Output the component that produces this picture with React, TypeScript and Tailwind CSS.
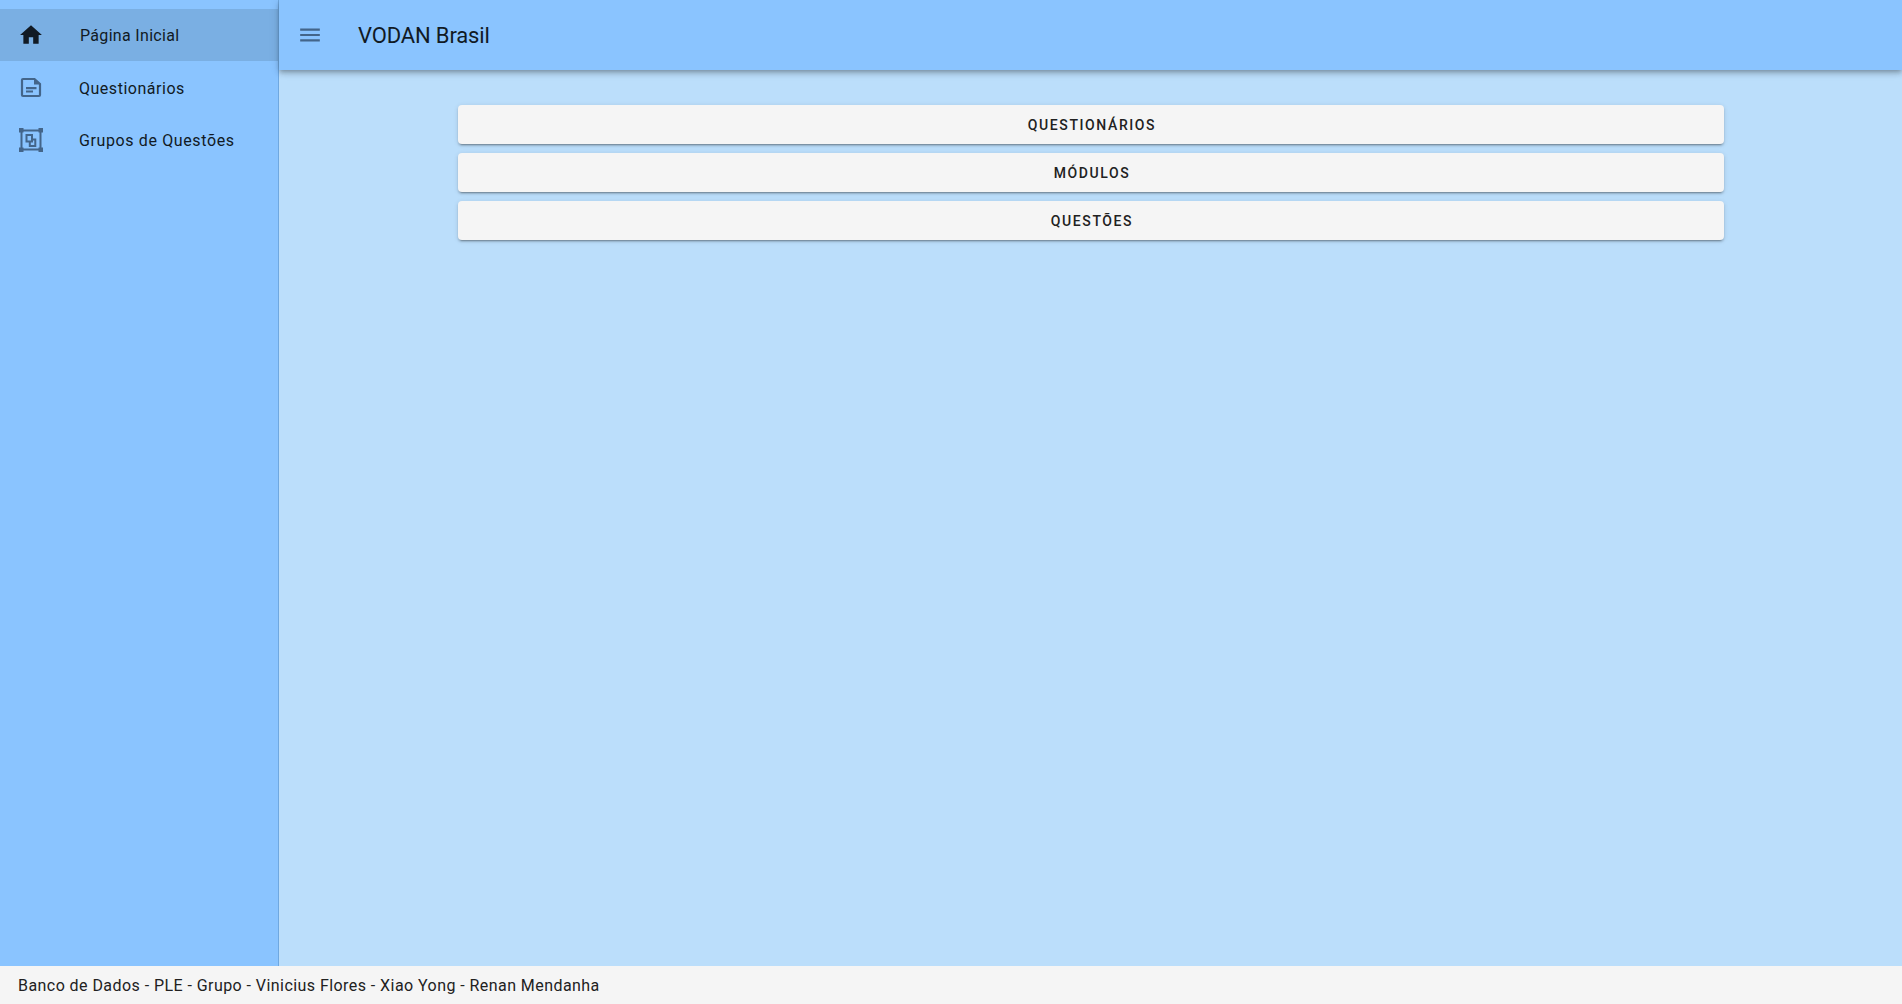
import React from "react";

const nav = [
  { label: "Página Inicial", active: true, icon: "home", row: "h-[52px]", text: "pl-[1px] tracking-[0.32px]" },
  { label: "Questionários", active: false, icon: "doc", row: "h-[53px]", text: "tracking-[0.52px]" },
  { label: "Grupos de Questões", active: false, icon: "group", row: "h-[52px]", text: "tracking-[0.62px]" },
];

function NavIcon({ name }: { name: string }) {
  if (name === "home") {
    return (
      <svg viewBox="1 1 22 22" className="block w-6 h-6 fill-[#111a24]">
        <path d="M10 20v-6h4v6h5v-8h3L12 3 2 12h3v8z" />
      </svg>
    );
  }
  if (name === "doc") {
    return (
      <svg viewBox="0 1 24 24" className="block w-6 h-6 fill-none stroke-[#43658a]">
        <path strokeWidth="2.200" d="M3 5a1 1 0 0 1 1-1h11.500L21 9v11a1 1 0 0 1-1 1H4a1 1 0 0 1-1-1z" />
        <path fill="#43658a" stroke="none" d="M15 3.500l7 6h-7z" />
        <path fill="#43658a" stroke="none" d="M7 12h10.500v2.200H7zM7 15.400h7v2.200H7z" />
      </svg>
    );
  }
  return (
    <svg viewBox="0 0 24 24" className="block w-6 h-6 fill-none stroke-[#43658a]">
      <path strokeWidth="2" d="M2.500 2.500h19v19h-19z" />
      <path fill="#43658a" stroke="none" d="M0 0h4.500v4.500H0zM19.500 0H24v4.500h-4.500zM0 19.500h4.500V24H0zM19.500 19.500H24V24h-4.500z" />
      <path strokeWidth="2" d="M7.500 7h5.500v6.500H7.500zM10.800 13.500v4.500h5.500v-6.500h-3.300" />
    </svg>
  );
}

export default function App() {
  return (
    <div className="flex flex-col h-[1004px] w-[1902px] overflow-hidden font-['Roboto',sans-serif]">
      <div className="flex flex-1 min-h-0">
        <aside className="w-[279px] shrink-0 bg-[#8ac4ff] border-r border-[#6fa8e0] pt-[9px]">
          {nav.map((n) => (
            <div
              key={n.label}
              className={`flex items-center ${n.row} ${n.active ? "bg-[#7aafe3]" : ""}`}
            >
              <div className="w-[79px] pl-[19px] shrink-0">
                <NavIcon name={n.icon} />
              </div>
              <span className={`text-[16px] leading-[24px] pt-[2px] text-[#111a24] ${n.text}`}>{n.label}</span>
            </div>
          ))}
        </aside>
        <div className="flex-1 flex flex-col bg-[#bbdefb] min-w-0">
          <header className="h-[70px] shrink-0 flex items-center bg-[#8ac4ff] shadow-[0_2px_4px_-1px_rgba(0,0,0,0.2),0_4px_5px_0_rgba(0,0,0,0.14),0_1px_10px_0_rgba(0,0,0,0.12)]">
            <svg viewBox="1 1 22 22" className="w-6 h-6 ml-[19px] fill-[#43658a]">
              <path d="M3 18h18v-2H3zm0-5h18v-2H3zm0-7v2h18V6z" />
            </svg>
            <h1 className="ml-[36px] pt-[2px] text-[22px] font-normal text-[#111a24] leading-none tracking-[-0.15px]">VODAN Brasil</h1>
          </header>
          <main className="flex flex-col gap-[9px] pt-[35px] pl-[179px] pr-[178px]">
            {["QUESTIONÁRIOS", "MÓDULOS", "QUESTÕES"].map((b) => (
              <button
                key={b}
                className="h-[39px] pt-[1px] pl-[2px] rounded-[4px] bg-[#f5f5f5] text-[14px] font-medium tracking-[1.6px] text-[#212121] shadow-[0_3px_1px_-2px_rgba(0,0,0,0.2),0_2px_2px_0_rgba(0,0,0,0.14),0_1px_5px_0_rgba(0,0,0,0.12)]"
              >
                {b}
              </button>
            ))}
          </main>
        </div>
      </div>
      <footer className="h-[38px] pt-[2px] shrink-0 bg-[#f5f5f5] flex items-center pl-[18px] text-[16px] tracking-[0.44px] text-[#212121]">
        Banco de Dados - PLE - Grupo - Vinicius Flores - Xiao Yong - Renan Mendanha
      </footer>
    </div>
  );
}
